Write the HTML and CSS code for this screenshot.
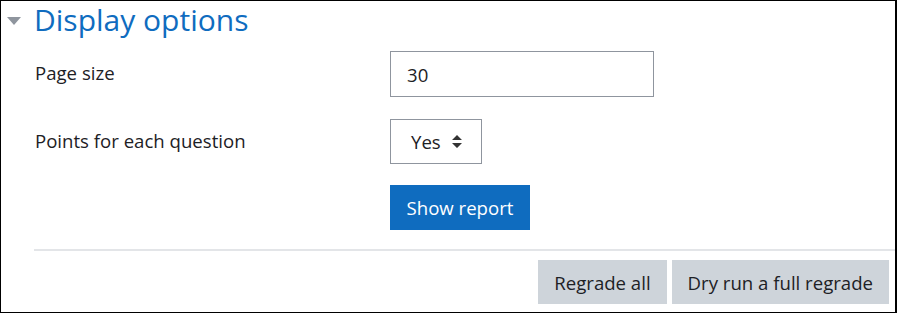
FILE: index.html
```html
<!DOCTYPE html>
<html lang="en">
<head>
<meta charset="utf-8">
<title>Display options</title>
<link rel="stylesheet" href="styles.css">
</head>
<body>
<div class="frame">
  <fieldset class="options">
    <legend class="legend">
      <span class="caret"></span>
      <span class="legend-text">Display options</span>
    </legend>
    <div class="form">
      <div class="row">
        <label class="label" for="pagesize">Page size</label>
        <input class="input" id="pagesize" type="text" value="30">
      </div>
      <div class="row">
        <label class="label" for="points">Points for each question</label>
        <div class="select">
          <span class="select-text">Yes</span>
          <svg class="select-arrows" width="10" height="13" viewBox="0 0 10 13"><path d="M5 0 L10 5 H0 Z M0 8 H10 L5 13 Z" fill="#333"/></svg>
        </div>
      </div>
      <div class="row">
        <span class="label"></span>
        <button class="btn btn-primary" type="button">Show report</button>
      </div>
    </div>
  </fieldset>
  <div class="actions">
    <button class="btn btn-secondary" type="button">Regrade all</button>
    <button class="btn btn-secondary" type="button">Dry run a full regrade</button>
  </div>
</div>
</body>
</html>
```
FILE: styles.css
```css
* { box-sizing: border-box; }
html, body { margin: 0; padding: 0; background: #fff; }
body {
  font-family: "Open Sans", "Noto Sans", sans-serif;
  font-size: 18.6px;
  color: #1d2125;
}
.frame {
  width: 897px;
  height: 313px;
  border: 1px solid #000;
  border-right-width: 2px;
  overflow: hidden;
}
.options {
  border: 0;
  margin: 0;
  padding: 0;
}
.legend {
  display: flex;
  align-items: center;
  padding: 0;
  margin: 0;
  height: 40px;
}
.caret {
  width: 0;
  height: 0;
  margin: 0 13px 0 6px;
  border-left: 7px solid transparent;
  border-right: 7px solid transparent;
  border-top: 8px solid #8f959e;
}
.legend-text {
  color: #0f6cbf;
  font-size: 30px;
  line-height: 38px;
  margin-top: -2px;
}
.form {
  padding: 10px 0 0 34px;
  display: flex;
  flex-direction: column;
  gap: 22px;
}
.row {
  display: flex;
  align-items: flex-start;
}
.label {
  width: 355px;
  flex: none;
  padding-top: 9px;
  line-height: 26px;
}
.input {
  width: 264px;
  height: 46px;
  border: 1px solid #8f959e;
  padding: 0 16px;
  font: inherit;
  color: #1d2125;
  outline: none;
}
.select {
  width: 92px;
  height: 45px;
  border: 1px solid #8f959e;
  display: flex;
  align-items: center;
  padding-left: 20px;
  gap: 11px;
}
.btn {
  font: inherit;
  border: 0;
  height: 45px;
  padding: 0 16px;
  line-height: 45px;
  cursor: pointer;
}
.btn-primary {
  background: #0f6cbf;
  color: #fff;
  width: 140px;
  padding: 0;
  margin-top: -1px;
}
.actions {
  margin: 19px 0 0 33px;
  border-top: 2px solid #e3e5e8;
  padding: 9px 6px 0 0;
  display: flex;
  justify-content: flex-end;
  gap: 5px;
}
.btn-secondary {
  background: #ced4da;
  color: #1d2125;
  height: 44px;
  padding: 0 16px;
}
```
